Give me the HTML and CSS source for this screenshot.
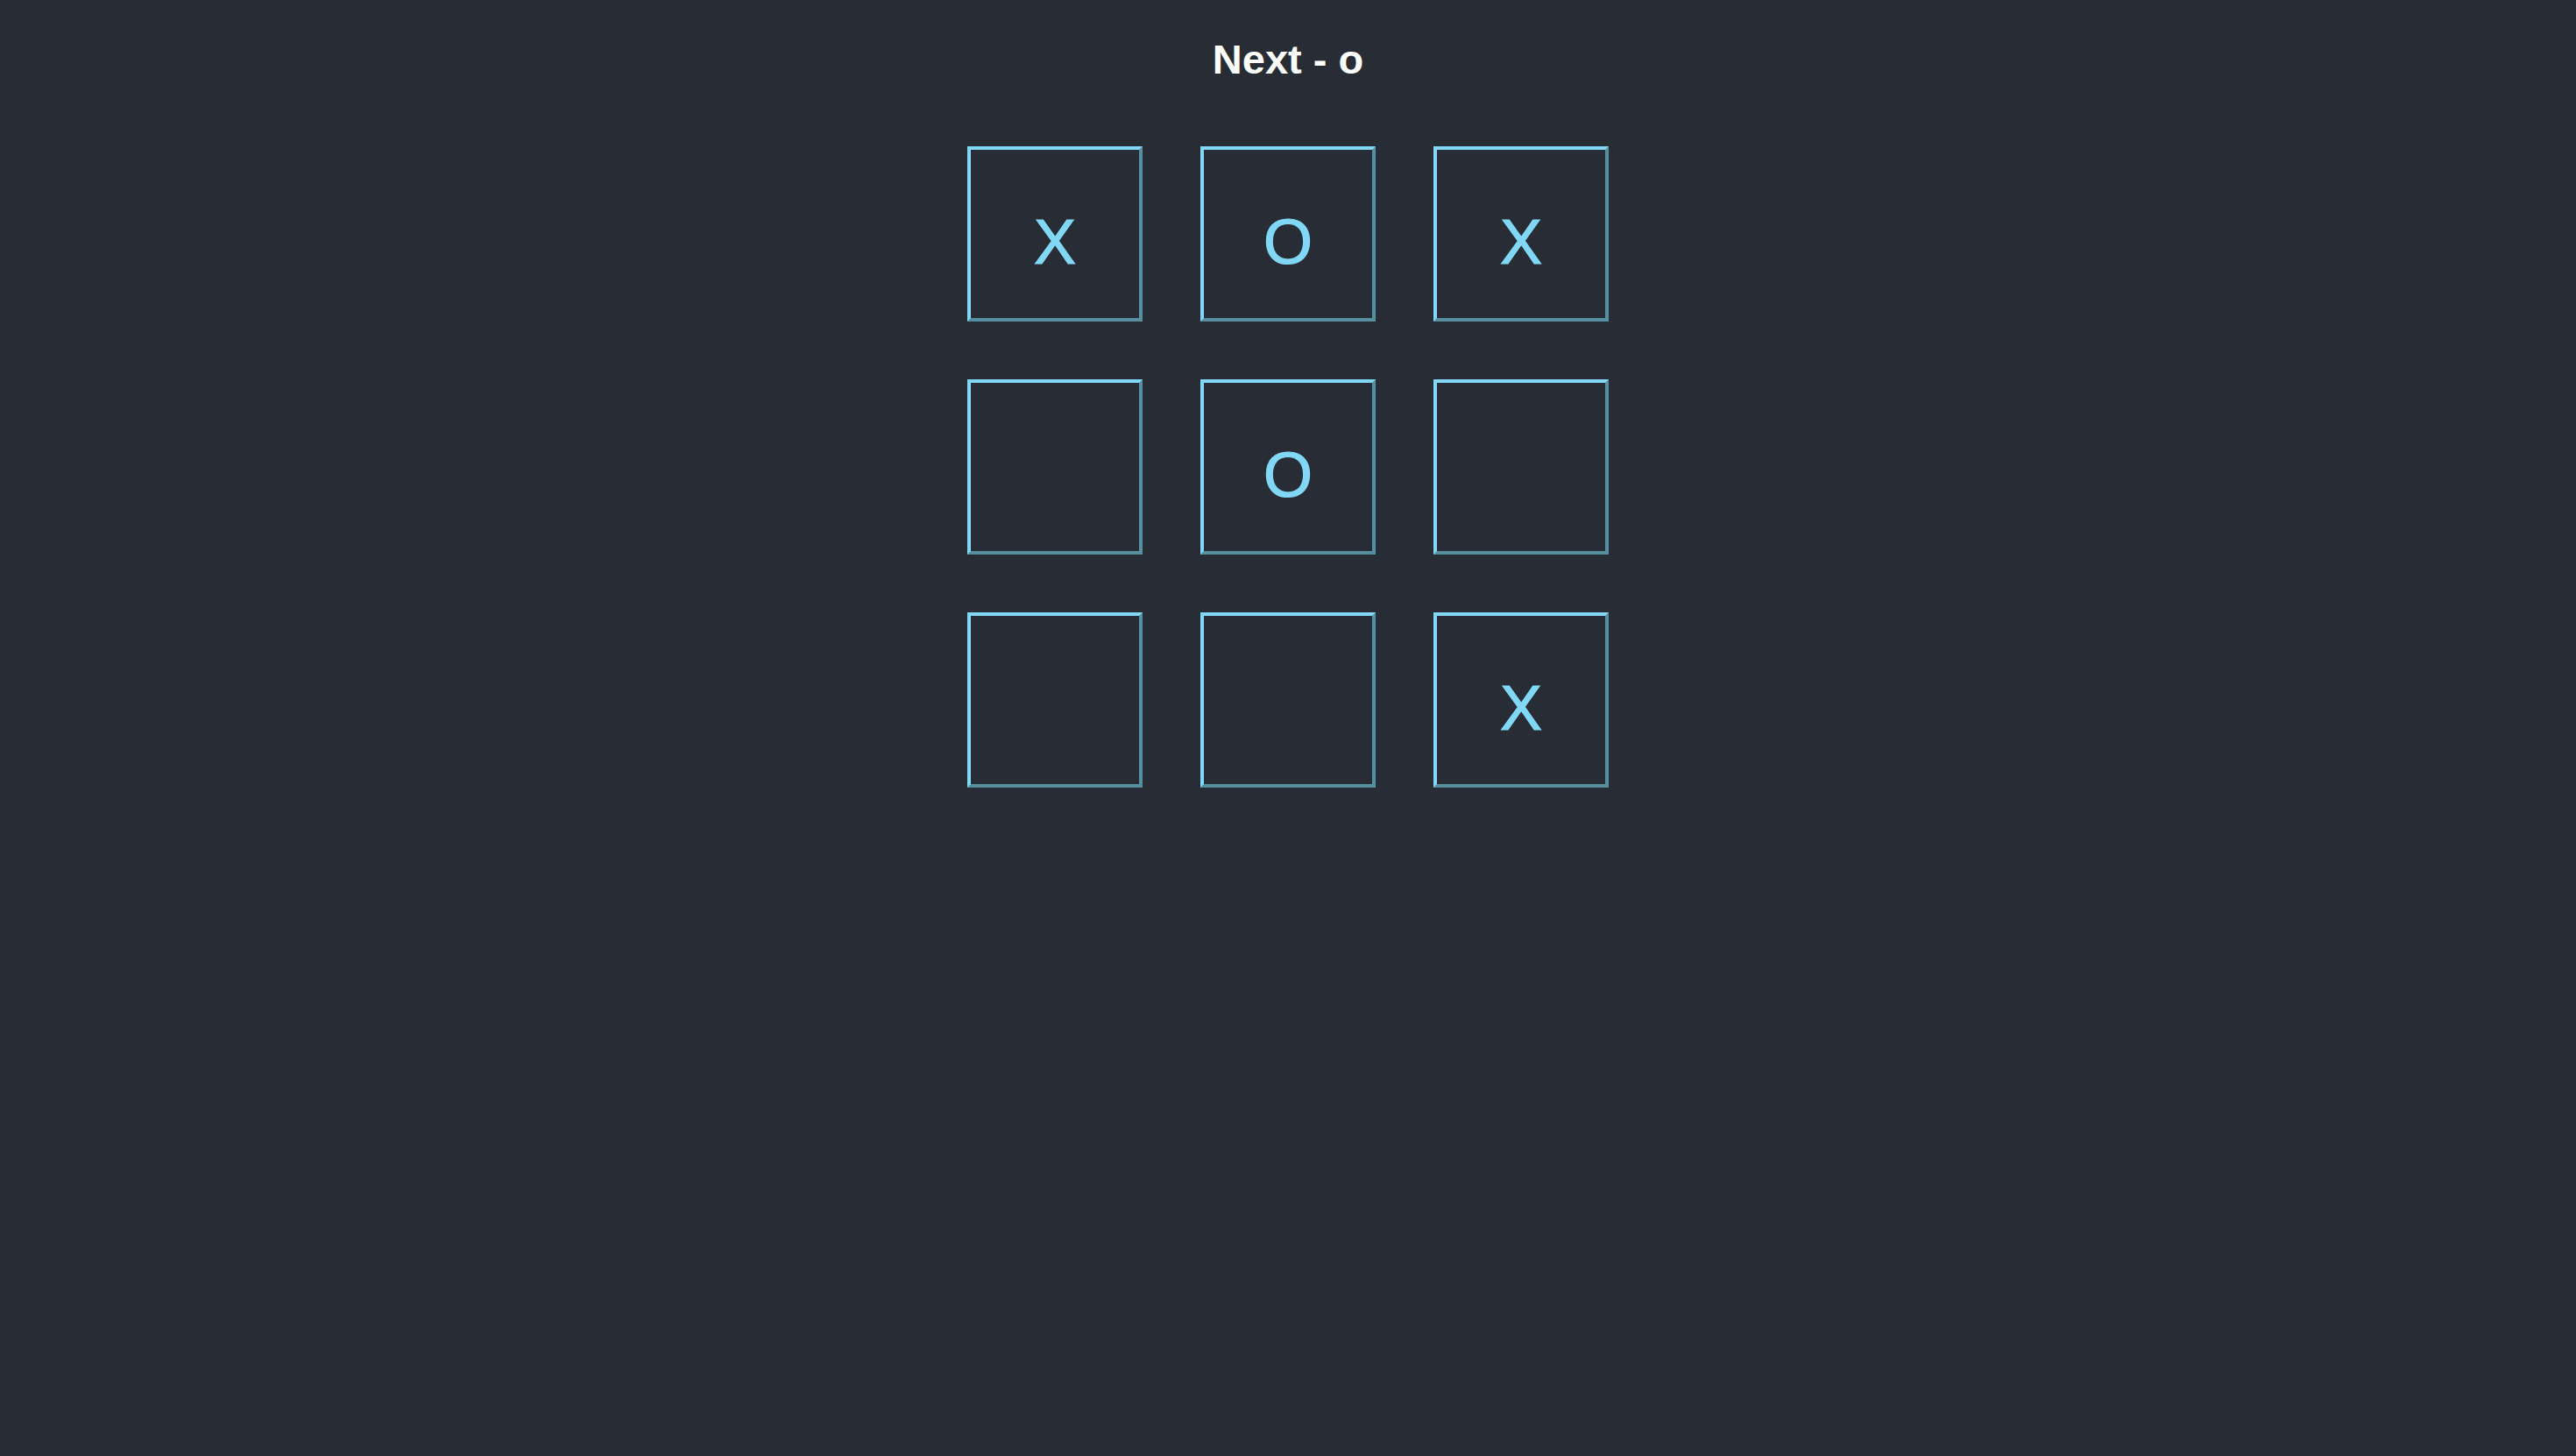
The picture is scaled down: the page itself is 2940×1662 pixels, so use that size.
FILE: index.html
```html
<!DOCTYPE html>
<html lang="en">
<head>
<meta charset="utf-8">
<title>Tic Tac Toe</title>
<link rel="stylesheet" href="styles.css">
</head>
<body>
<main class="game">
  <h1 class="status">Next - o</h1>
  <div class="board">
    <button class="cell">X</button>
    <button class="cell">O</button>
    <button class="cell">X</button>
    <button class="cell"></button>
    <button class="cell">O</button>
    <button class="cell"></button>
    <button class="cell"></button>
    <button class="cell"></button>
    <button class="cell">X</button>
  </div>
</main>
</body>
</html>
```
FILE: styles.css
```css
html, body {
  margin: 0;
  padding: 0;
  background: #282c34;
  min-height: 100%;
}
body {
  font-family: "Liberation Sans", Arial, sans-serif;
  color: #ffffff;
  height: 1662px;
}
.game {
  display: flex;
  flex-direction: column;
  align-items: center;
  padding-top: 41px;
}
.status {
  margin: 0;
  font-size: 47px;
  line-height: 54px;
  font-weight: 700;
  color: #ffffff;
}
.board {
  margin-top: 72px;
  display: grid;
  grid-template-columns: repeat(3, 200px);
  grid-auto-rows: 200px;
  gap: 66px;
}
.cell {
  box-sizing: border-box;
  width: 200px;
  height: 200px;
  margin: 0;
  padding: 18px 0 0 0;
  background: transparent;
  border-width: 4px;
  border-style: solid;
  border-color: #80d8f6 #568fa0 #568fa0 #80d8f6;
  color: #80d8f6;
  font-family: "Liberation Sans", Arial, sans-serif;
  font-size: 72px;
  line-height: 174px;
  text-align: center;
  vertical-align: top;
  -webkit-text-stroke: 1.2px #80d8f6;
}
```
